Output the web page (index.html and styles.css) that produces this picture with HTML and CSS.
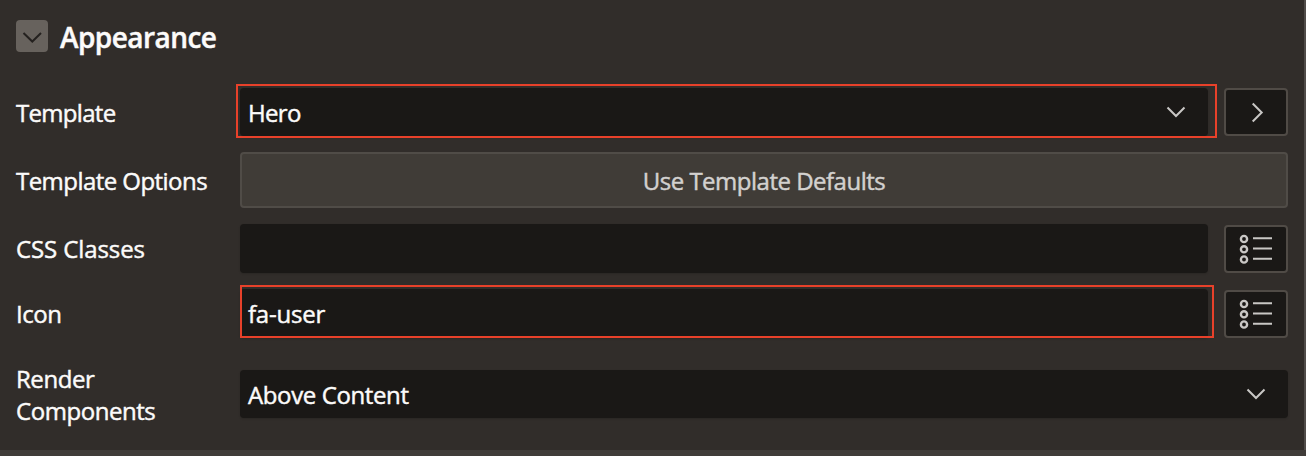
FILE: index.html
```html
<!DOCTYPE html>
<html lang="en">
<head>
<meta charset="utf-8">
<title>Appearance</title>
<link rel="stylesheet" href="styles.css">
</head>
<body>
<section class="panel">
  <header class="header">
    <button class="toggle" aria-label="Collapse"><svg width="32" height="32" viewBox="0 0 32 32"><path d="M7.5 13 16.3 21.5 25 13"/></svg></button>
    <h2 class="title">Appearance</h2>
  </header>
  <div class="row">
    <span class="label"><span class="t-template">Template</span></span>
    <div class="field field-template"><span class="t-hero">Hero</span>
      <svg class="chevron" width="20" height="12" viewBox="0 0 20 12"><path d="M1.5 1.5 10 10 18.5 1.5"/></svg>
      <i class="mark mark-template"></i></div>
    <button class="side" aria-label="Go to template"><svg width="64" height="48" viewBox="0 0 64 48"><path d="M28.7 15.5 37.7 24.5 28.7 33.5"/></svg></button>
  </div>
  <div class="row row-options">
    <span class="label"><span class="t-options">Template Options</span></span>
    <button class="defaults"><span class="t-defaults">Use Template Defaults</span></button>
  </div>
  <div class="row row-input">
    <span class="label"><span class="t-css">CSS Classes</span></span>
    <div class="field"></div>
    <button class="side" aria-label="Pick classes"><svg width="64" height="48" viewBox="0 0 64 48"><g class="rings"><circle cx="20" cy="14" r="3.1"/><circle cx="20" cy="24.3" r="3.1"/><circle cx="20" cy="34.5" r="3.1"/></g><path d="M29 13.2H48M29 23.5H48M29 33.7H48"/></svg></button>
  </div>
  <div class="row row-input">
    <span class="label"><span class="t-icon">Icon</span></span>
    <div class="field"><span class="t-user">fa-user</span><i class="mark mark-icon"></i></div>
    <button class="side" aria-label="Pick icon"><svg width="64" height="48" viewBox="0 0 64 48"><g class="rings"><circle cx="20" cy="14" r="3.1"/><circle cx="20" cy="24.3" r="3.1"/><circle cx="20" cy="34.5" r="3.1"/></g><path d="M29 13.2H48M29 23.5H48M29 33.7H48"/></svg></button>
  </div>
  <div class="row row-render">
    <span class="label"><span class="t-render">Render Components</span></span>
    <div class="field"><span class="t-above">Above Content</span>
      <svg class="chevron" width="20" height="12" viewBox="0 0 20 12"><path d="M1.5 1.5 10 10 18.5 1.5"/></svg></div>
  </div>
</section>
</body>
</html>
```
FILE: styles.css
```css
* { box-sizing: border-box; }
body {
  margin: 0;
  height: 456px;
  overflow: hidden;
  background: #403c39;
  color: #fcfbfa;
  font: 24px/32px "Open Sans", "Noto Sans", sans-serif;
  -webkit-text-stroke: 0.45px currentColor;
}
.panel {
  display: flex;
  flex-direction: column;
  gap: 16px;
  height: 450px;
  padding: 20px 16px 0;
  background: #312d2a;
  border-right: 2px solid #504c49;
}
.header { display: flex; align-items: center; gap: 12px; height: 32px; margin-bottom: 20px; }
.toggle { width: 32px; height: 32px; padding: 0; border: 0; border-radius: 4px; background: #67625d; }
.title { margin: 1px 0 0; font-size: 28px; line-height: 32px; font-weight: 600; letter-spacing: -0.55px; }
svg { display: block; fill: none; stroke: #c9c7c5; stroke-width: 2; }
.toggle svg { stroke: #24211f; }
.row { display: flex; gap: 16px; height: 48px; align-items: center; }
.row-options { height: 56px; }
.row-input { height: 49px; align-items: flex-end; }
.row-render { height: 64px; margin-top: 8px; }
.label { width: 208px; flex: none; padding-top: 2px; letter-spacing: -0.55px; }
.row-input .label { padding-bottom: 8px; }
.row-render .label { width: 160px; margin-right: 48px; padding: 2px 0 0; }
.field {
  position: relative;
  flex: 1;
  display: flex;
  align-items: center;
  justify-content: space-between;
  height: 48px;
  padding: 2px 22px 0 8px;
  border-radius: 4px;
  background: #1a1816;
  box-shadow: 0 1px 2px rgba(0, 0, 0, .15);
  letter-spacing: -0.5px;
}
.row-input .field { height: 49px; padding-top: 0; }
.t-template, .t-hero { letter-spacing: -0.7px; }
.t-css { letter-spacing: -0.1px; }
.t-icon { letter-spacing: -0.5px; }
.t-render { letter-spacing: -0.45px; }
.t-user { letter-spacing: -0.2px; }
.t-above { letter-spacing: -0.38px; }
.chevron { margin-top: -3px; }
.side {
  flex: none;
  width: 64px;
  height: 48px;
  padding: 0;
  border: 2px solid #504b46;
  border-radius: 4px;
  background: #1a1816;
}
.side svg { margin: -2px; }
.rings { stroke-width: 2.4; }
.defaults {
  flex: 1;
  height: 56px;
  padding: 2px 0 0;
  border: 2px solid #504c47;
  border-radius: 4px;
  background: #403c37;
  color: #d3d1cf;
  font: inherit;
  letter-spacing: -0.5px;
}
.mark { position: absolute; border: 2px solid #e8412a; pointer-events: none; }
.mark-template { inset: -4px -9px -2px -4px; }
.mark-icon { inset: -4px -6px 0 0; }
```
